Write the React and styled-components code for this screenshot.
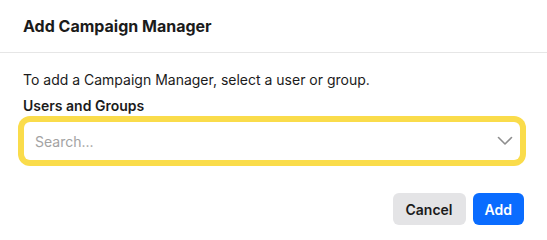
import React from 'react'
import styled, { createGlobalStyle } from 'styled-components';

const GlobalStyle = createGlobalStyle`
body {
  margin: 0;
  background: #ffffff;
  font-family: Inter, "Noto Sans", sans-serif;
  color: #1b1b1b;
}
`;

const Dialog = styled.div`
width: 547px;
background: #fff;
`;

const Header = styled.div`
height: 52px;
display: flex;
align-items: center;
padding: 0 23px;
border-bottom: 1px solid #e6e6e6;
`;

const Title = styled.h1`
margin: 0;
font-size: 16px;
font-weight: 700;
line-height: 20px;
`;

const Body = styled.div`
padding: 17px 23px 0;
`;

const Text = styled.p`
margin: 0;
font-size: 14px;
line-height: 20px;
`;

const Label = styled.label`
display: block;
margin: 6px 0 6px;
font-size: 14px;
font-weight: 600;
line-height: 20px;
`;

const SelectBox = styled.div`
display: flex;
align-items: center;
height: 38px;
margin: 0 4px 0 1px;
padding: 0 7px 0 11px;
border-radius: 6px;
background: #fff;
box-shadow: 0 0 0 6px #fadc4b;
`;

const Placeholder = styled.span`
flex: 1;
font-size: 14px;
color: #a3a3a3;
`;

const Footer = styled.div`
display: flex;
justify-content: flex-end;
gap: 7px;
margin-top: 33px;
padding: 0 23px;
`;

const Button = styled.button`
height: 32px;
padding: 0 ${p => p.$primary ? '12px' : '13px'};
border: 0;
border-radius: 6px;
font-family: inherit;
font-size: 14px;
font-weight: 600;
cursor: pointer;
background: ${p => p.$primary ? '#0a6cff' : '#e4e4e6'};
color: ${p => p.$primary ? '#fff' : '#1b1b1b'};
`;

const Chevron = () => (
  <svg width="16" height="10" viewBox="0 0 16 10" fill="none">
    <polyline points="1.5,1.5 8,8 14.5,1.5" stroke="#8e8e8e" strokeWidth="1.6" strokeLinecap="round" strokeLinejoin="round" />
  </svg>
);

export default function App() {
  return (
    <Dialog>
      <GlobalStyle />
      <Header>
        <Title>Add Campaign Manager</Title>
      </Header>
      <Body>
        <Text>To add a Campaign Manager, select a user or group.</Text>
        <Label>Users and Groups</Label>
        <SelectBox>
          <Placeholder>Search...</Placeholder>
          <Chevron />
        </SelectBox>
      </Body>
      <Footer>
        <Button>Cancel</Button>
        <Button $primary>Add</Button>
      </Footer>
    </Dialog>
  )
}
